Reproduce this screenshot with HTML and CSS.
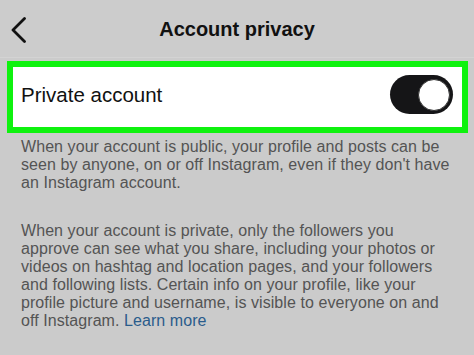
FILE: index.html
```html
<!DOCTYPE html>
<html>
<head>
<meta charset="utf-8">
<link rel="stylesheet" href="styles.css">
</head>
<body>
<div class="screen">
  <header class="topbar">
    <svg class="back" width="16" height="26" viewBox="0 0 16 26"><path d="M13.5 1.5 L2 13 L13.5 24.5" fill="none" stroke="#111" stroke-width="2.8" stroke-linecap="round" stroke-linejoin="round"/></svg>
    <h1 class="title">Account privacy</h1>
  </header>
  <div class="card">
    <span class="label">Private account</span>
    <span class="toggle"><span class="knob"></span></span>
  </div>
  <p class="desc first">When your account is public, your profile and posts can be seen by anyone, on or off Instagram, even if they don't have an Instagram account.</p>
  <p class="desc second">When your account is private, only the followers you approve can see what you share, including your photos or videos on hashtag and location pages, and your followers and following lists. Certain info on your profile, like your profile picture and username, is visible to everyone on and off Instagram. <span class="link">Learn more</span></p>
</div>
</body>
</html>
```
FILE: styles.css
```css
html, body {
  margin: 0;
  padding: 0;
  background: #cbcbcb;
}
.screen {
  width: 474px;
  height: 355px;
  overflow: hidden;
  font-family: "Liberation Sans", Arial, sans-serif;
  background: #cbcbcb;
}
.topbar {
  position: relative;
  height: 57px;
  display: flex;
  align-items: center;
  justify-content: center;
  border-bottom: 1px solid #d3d3d3;
  background: #cccccc;
}
.back {
  position: absolute;
  left: 11px;
  top: 17px;
}
.title {
  margin: 0;
  font-size: 20px;
  font-weight: bold;
  color: #111;
  padding-top: 2px;
}
.card {
  margin: 3px 6px 0 7px;
  height: 55px;
  border: 6px solid #0ef20e;
  background: #fff;
  display: flex;
  align-items: center;
  justify-content: space-between;
  padding: 0 9px 5px 8px;
}
.label {
  font-size: 20.5px;
  color: #111;
}
.toggle {
  width: 63px;
  height: 39px;
  border-radius: 20px;
  background: #151517;
  display: flex;
  align-items: center;
  justify-content: flex-end;
  padding-right: 3px;
  box-sizing: border-box;
}
.knob {
  width: 32px;
  height: 32px;
  border-radius: 50%;
  background: #fff;
  box-sizing: border-box;
  border: 1px solid #333;
}
.desc {
  margin: 0;
  width: 432px;
  padding-left: 21px;
  font-size: 16px;
  line-height: 18px;
  letter-spacing: 0.07px;
  color: #545454;
}
.first {
  margin-top: 5px;
}
.second {
  margin-top: 30px;
}
.link {
  color: #2a5c8c;
}
```
